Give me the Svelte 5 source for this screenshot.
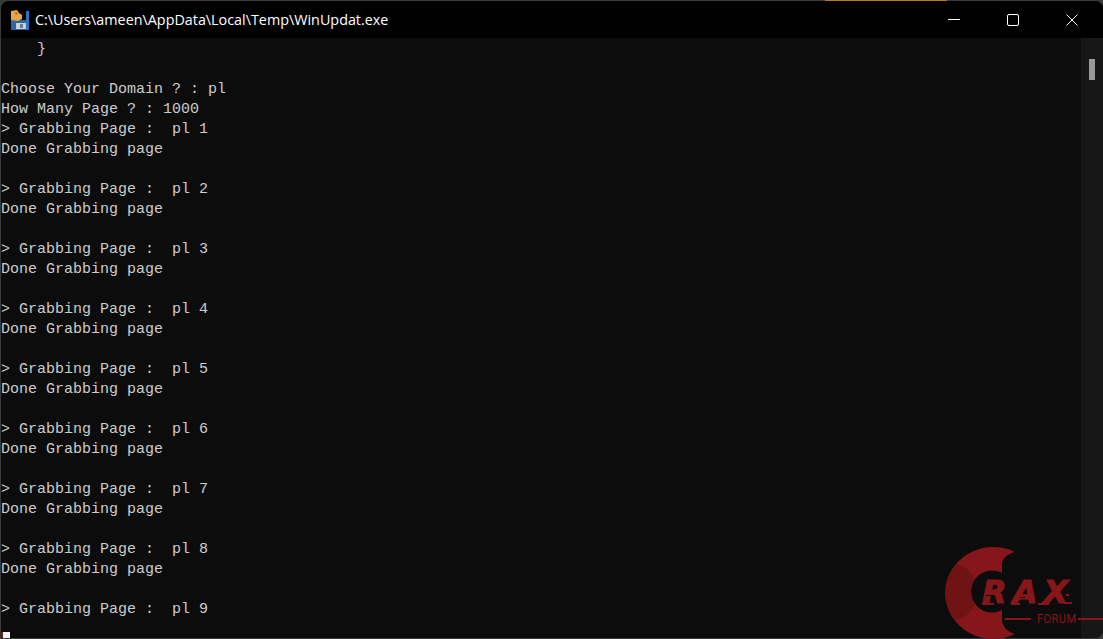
<script lang="ts">
  const lines: string[] = [
    "    }",
    "",
    "Choose Your Domain ? : pl",
    "How Many Page ? : 1000",
  ]
  for (let page = 1; page <= 9; page++) {
    lines.push(`> Grabbing Page :  pl ${page}`)
    if (page < 9) lines.push("Done Grabbing page", "")
  }
</script>

<div class="desktop">
  <div class="window">
    <header class="titlebar">
      <svg class="app-icon" viewBox="0 0 18 20" width="18" height="20" aria-hidden="true">
        <rect x="0" y="10" width="18" height="10" fill="#2a66a8" />
        <rect x="15" y="1" width="3" height="19" fill="#2f73bd" />
        <rect x="5" y="13" width="10" height="6" fill="#c9d0d0" />
        <rect x="9" y="14" width="3" height="4" fill="#6f7d86" />
        <path d="M0 1 L6 0 L8 3 L11 5 L11 9 L7 11 L0 10 Z" fill="#eba548" />
        <path d="M4 2 L7 3 L5 5 Z" fill="#9a6420" />
      </svg>
      <span class="title">C:\Users\ameen\AppData\Local\Temp\WinUpdat.exe</span>
      <div class="controls">
        <button class="control" aria-label="Minimize">
          <svg viewBox="0 0 12 12" width="12" height="12"><path d="M0 5.5H12" /></svg>
        </button>
        <button class="control" aria-label="Maximize">
          <svg viewBox="0 0 12 12" width="12" height="12"><rect x="0.5" y="0.5" width="11" height="11" rx="1.5" /></svg>
        </button>
        <button class="control" aria-label="Close">
          <svg viewBox="0 0 12 12" width="12" height="12"><path d="M0.5 0.5L11.5 11.5M11.5 0.5L0.5 11.5" /></svg>
        </button>
      </div>
    </header>

    <div class="body">
      <pre class="console">{lines.join("\n")}</pre>
      <div class="scrollbar"><div class="thumb"></div></div>
    </div>
  </div>

  <div class="corner-patch"></div>

  <div class="watermark">
    <svg class="crescent" viewBox="0 0 100 92" width="100" height="92" aria-hidden="true">
      <defs>
        <clipPath id="crescent-clip">
          <path d="M70 5 A48 46 0 1 0 70 87 C62 85 57 79 57 72 L57 63 A21 21 0 1 1 57 26 L57 18 C57 11 62 7 70 5 Z" />
        </clipPath>
      </defs>
      <g clip-path="url(#crescent-clip)">
        <rect width="100" height="92" fill="#86161a" />
        <ellipse cx="8" cy="45" rx="24" ry="28" fill="#701315" />
      </g>
    </svg>
    <span class="rax">RAX</span>
    <svg class="speed" viewBox="0 0 100 30" width="100" height="30" aria-hidden="true">
      <g fill="#0c0c0c">
        <rect x="4" y="15" width="6" height="1" />
        <rect x="38" y="17" width="5" height="1" />
      </g>
      <g fill="#86161a">
        <rect x="0" y="23" width="12" height="2" />
        <rect x="29" y="23" width="9" height="2" />
        <rect x="56" y="23" width="11" height="2" />
        <rect x="82" y="22" width="8" height="2" />
        <rect x="84" y="14" width="3" height="2" />
      </g>
    </svg>
    <div class="forum">
      <span class="dash"></span>
      <span class="forum-label">FORUM</span>
      <span class="dash dash--long"></span>
    </div>
  </div>
</div>

<style>
  :global(body) {
    margin: 0;
  }

  .desktop {
    position: relative;
    box-sizing: border-box;
    width: 1103px;
    height: 639px;
    padding: 1px 0 1px 1px;
    overflow: hidden;
    background:
      linear-gradient(90deg, transparent 825px, #b8792a 825px, #b8792a 947px, transparent 947px) top / 100% 1px no-repeat,
      #3a3a3a;
  }

  .window {
    display: flex;
    flex-direction: column;
    height: 100%;
    overflow: hidden;
    border-radius: 8px;
    background: #0c0c0c;
  }

  .titlebar {
    display: flex;
    align-items: center;
    flex: 0 0 37px;
    padding-left: 10px;
    background: #000;
    color: #fff;
  }

  .app-icon {
    flex: 0 0 auto;
    margin-right: 6px;
  }

  .title {
    font-family: "Open Sans", "Liberation Sans", sans-serif;
    font-size: 14.35px;
    white-space: nowrap;
  }

  .controls {
    display: flex;
    margin-left: auto;
    margin-right: 8px;
  }

  .control {
    display: flex;
    align-items: center;
    justify-content: center;
    width: 46px;
    height: 37px;
    padding: 0;
    border: 0;
    background: none;
  }

  .control + .control {
    margin-left: 13px;
  }

  .control svg {
    fill: none;
    stroke: #fff;
    stroke-width: 1;
  }

  .body {
    display: flex;
    flex: 1;
    min-height: 0;
  }

  .console {
    flex: 1;
    margin: 0;
    padding: 2px 0 0;
    overflow: hidden;
    font-family: "Liberation Mono", monospace;
    font-size: 15px;
    line-height: 20px;
    color: #cccccc;
  }

  .scrollbar {
    flex: 0 0 22px;
    background: #171717;
  }

  .thumb {
    width: 6px;
    height: 21px;
    margin: 21px 0 0 8px;
    background: #9a9a9a;
  }

  .corner-patch {
    position: absolute;
    left: 0;
    bottom: 1px;
    width: 10px;
    height: 6px;
    background: linear-gradient(90deg, #4a2a20 0, #4a2a20 3px, #f2f2f2 3px);
  }

  .watermark {
    position: absolute;
    left: 945px;
    top: 547px;
    width: 158px;
    height: 92px;
    color: #86161a;
  }

  .crescent {
    position: absolute;
    left: 0;
    top: 0;
  }

  .rax {
    position: absolute;
    left: 37px;
    top: 26px;
    font-family: "DejaVu Sans", sans-serif;
    font-size: 32px;
    font-weight: 700;
    font-style: italic;
    letter-spacing: 6px;
    line-height: 38px;
    -webkit-text-stroke: 1px #86161a;
  }

  .speed {
    position: absolute;
    left: 37px;
    top: 33px;
  }

  .forum {
    position: absolute;
    left: 60px;
    top: 65px;
    right: 0;
    display: flex;
    align-items: center;
    gap: 6px;
  }

  .dash {
    width: 26px;
    height: 2px;
    background: #86161a;
  }

  .dash--long {
    flex: 1;
  }

  .forum-label {
    width: 35px;
    font-family: "Roboto", sans-serif;
    font-size: 13px;
    line-height: 14px;
    letter-spacing: 0.5px;
    white-space: nowrap;
    transform: scaleX(0.85);
    transform-origin: left;
  }
</style>
